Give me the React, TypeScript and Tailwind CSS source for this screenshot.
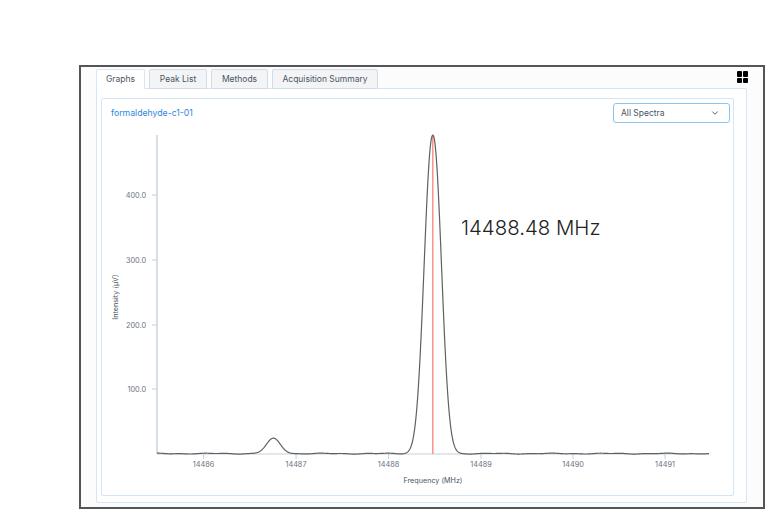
import { ChevronDown } from "lucide-react";

const TABS = [
  { label: "Graphs", width: "w-[49px]", active: true },
  { label: "Peak List", width: "w-[58px]", active: false },
  { label: "Methods", width: "w-[57px]", active: false },
  { label: "Acquisition Summary", width: "w-[106px]", active: false },
];

const X_TICKS = [
  { x: 203.5, label: "14486" },
  { x: 296, label: "14487" },
  { x: 388.5, label: "14488" },
  { x: 481, label: "14489" },
  { x: 573, label: "14490" },
  { x: 665, label: "14491" },
];

const Y_TICKS = [
  { y: 195, label: "400.0" },
  { y: 260, label: "300.0" },
  { y: 325, label: "200.0" },
  { y: 389, label: "100.0" },
];

// spectrum in screen px: baseline ripple, the small peak and the main peak
function spectrumPoints() {
  const pts: string[] = [];
  for (let x = 157; x <= 709; x += 0.5) {
    const main = 318 * Math.exp(-Math.pow(Math.abs(x - 432.8) / 11.74, 2.15));
    const small = 15 * Math.exp(-Math.pow(x - 273.5, 2) / (2 * 7 * 7));
    const ripple = 0.3 * Math.sin(x / 9) + 0.2 * Math.sin(x / 3.7);
    pts.push(`${x},${(453.6 - main - small + ripple).toFixed(2)}`);
  }
  return pts.join(" ");
}

function Chart() {
  return (
    <svg width="630" height="370" viewBox="102 125 630 370" className="block">
      <line x1="157" y1="135" x2="157" y2="454" stroke="#c8d0dc" strokeWidth="1.4" />
      <line x1="157" y1="454" x2="709" y2="454" stroke="#c8d0dc" strokeWidth="1" />
      {Y_TICKS.map((t) => (
        <g key={t.label}>
          <line x1="152" y1={t.y} x2="157" y2={t.y} stroke="#c8d0dc" />
          <text x="146" y={t.y + 3} textAnchor="end" fontSize="7.3" fill="#6b7280">{t.label}</text>
        </g>
      ))}
      {X_TICKS.map((t) => (
        <g key={t.label}>
          <line x1={t.x} y1="454" x2={t.x} y2="459" stroke="#c8d0dc" />
          <text x={t.x} y="467" textAnchor="middle" fontSize="7.3" fill="#6b7280">{t.label}</text>
        </g>
      ))}
      <text x="433" y="483" textAnchor="middle" fontSize="7.2" fill="#4b5563">Frequency (MHz)</text>
      <text x="0" y="0" textAnchor="middle" fontSize="7.2" fill="#4b5563" transform="translate(118 297) rotate(-90)">Intensity (µV)</text>
      <line x1="432.8" y1="135" x2="432.8" y2="454" stroke="#fb8a8a" strokeWidth="1.4" />
      <polyline points={spectrumPoints()} fill="none" stroke="#606060" strokeWidth="1.2" />
    </svg>
  );
}

export default function App() {
  return (
    <div className="h-[521px] w-[780px] overflow-hidden bg-white pl-[79px] pt-[65px] font-['Inter',sans-serif]">
      <div className="relative h-[444px] w-[686px] border-2 border-[#555555] bg-[#fcfcfc] pl-[15px] pr-[15px] pt-[2px]">
        {/* Tabs */}
        <div className="flex h-[20px] items-end gap-[4px]">
          {TABS.map((tab) => (
            <div
              key={tab.label}
              className={`flex h-[20px] items-center justify-center rounded-t-[2px] border text-[8.5px] text-[#4b5563] ${tab.width} ${
                tab.active ? "relative z-10 border-[#d7e6f5] border-b-white bg-white" : "border-[#cfdcea] bg-[#f3f4f6]"
              }`}
            >
              {tab.label}
            </div>
          ))}
        </div>

        {/* Layout toggle */}
        <div className="absolute right-[15px] top-[4px] grid h-[12px] w-[11px] grid-cols-2 gap-[1px]">
          <span className="rounded-[1px] bg-black" />
          <span className="rounded-[1px] bg-black" />
          <span className="rounded-[1px] bg-black" />
          <span className="rounded-[1px] bg-black" />
        </div>

        {/* Tab panel */}
        <div className="-mt-px h-[415px] w-[651px] rounded-[2px] border border-[#d3e5f6] bg-white px-[4px] pt-[9px]">
          <div className="relative h-[398px] w-[633px] rounded-[2px] border border-[#d3e5f6] bg-white">
            <div className="flex h-[26px] items-start justify-between pl-[9px] pr-[3px] pt-[4px]">
              <span className="pt-[5px] text-[8.7px] leading-[10px] text-[#2f86e0]">formaldehyde-c1-01</span>
              <div className="flex h-[20px] w-[117px] items-center justify-between rounded-[3px] border border-[#8cc6ee] bg-white pl-[7px] pr-[9px] text-[8.5px] text-[#4b5563]">
                <span>All Spectra</span>
                <ChevronDown size={10} strokeWidth={2.2} className="text-[#4b5563]" />
              </div>
            </div>
            <Chart />
            <span className="absolute left-[359px] top-[117px] text-[20.4px] font-light leading-[24px] text-[#222222]">14488.48 MHz</span>
          </div>
        </div>
      </div>
    </div>
  );
}
